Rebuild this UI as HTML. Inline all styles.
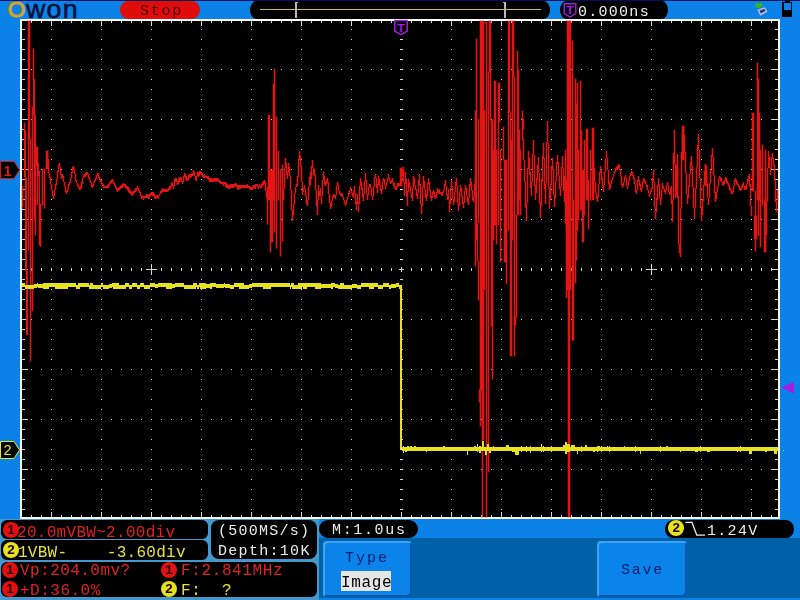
<!DOCTYPE html>
<html><head><meta charset="utf-8"><title>OWON oscilloscope</title>
<style>
html,body{margin:0;padding:0;}
body{width:800px;height:600px;overflow:hidden;background:#0a82e8;position:relative;font-family:"Liberation Mono","DejaVu Sans Mono",monospace;font-size:16px;line-height:16px;}
.abs{position:absolute;}
.t{position:absolute;white-space:pre;letter-spacing:0.1px;will-change:transform;}
.pill{position:absolute;background:#000;border-radius:9px;}
.box{position:absolute;background:#000;border-radius:6px;}
.circ{position:absolute;width:16px;height:16px;border-radius:50%;font-family:"Liberation Sans",sans-serif;font-weight:bold;font-size:13.5px;line-height:16px;text-align:center;color:#200;will-change:transform;}
.btn{position:absolute;background:#0a84ea;border-radius:4px;box-shadow:inset 2px 2px 0 #3ea2f4, inset -2px -2px 0 #0558a8;}
</style></head><body>
<div class="abs" style="left:0;top:0;width:800px;height:1px;background:#00105a"></div>
<!-- logo -->
<div class="abs" style="left:7.8px;top:-1.1px;font-family:'Liberation Sans',sans-serif;font-size:22.5px;line-height:22.5px;color:#d9a21c;-webkit-text-stroke:1.1px #d9a21c;">O</div>
<div class="abs" style="left:25.8px;top:-3.5px;font-family:'Liberation Sans',sans-serif;font-size:25px;line-height:25px;color:#00103c;-webkit-text-stroke:0.6px #00103c;letter-spacing:1.2px;white-space:nowrap;transform:scaleX(1.07);transform-origin:0 0;">won</div>
<!-- stop -->
<div class="abs" style="left:120px;top:1px;width:80px;height:18px;border-radius:8px/9px;background:#e00c0c"></div>
<div class="t" style="left:139.5px;top:4.3px;color:#4a0000;font-size:15px;letter-spacing:1.75px;">Stop</div>
<!-- position bar -->
<div class="pill" style="left:250px;top:1px;width:300px;height:18px;border-radius:6.5px/9px;"></div>
<div class="abs" style="left:260px;top:9px;width:281px;height:1px;background:#c8c23c"></div>
<div class="abs" style="left:294.5px;top:2px;width:2px;height:16px;background:#b8b8b8"></div>
<div class="abs" style="left:294.5px;top:2px;width:3.5px;height:1px;background:#b8b8b8"></div>
<div class="abs" style="left:504px;top:2px;width:2px;height:16px;background:#b8b8b8"></div>
<div class="abs" style="left:502.5px;top:2px;width:3.5px;height:1px;background:#b8b8b8"></div>
<div class="pill" style="left:560px;top:1px;width:108px;height:18px;border-radius:6px/9px;"></div>
<svg class="abs" style="left:562px;top:2px" width="16" height="17" viewBox="0 0 16 17"><path d="M2.2 1.8 H13.8 V11.5 L8 15 L2.2 11.5 Z" fill="#000" stroke="#a41ee0" stroke-width="1.4" stroke-linejoin="round"/><text x="8" y="11.9" text-anchor="middle" transform="translate(8 0) scale(1.18 1) translate(-8 0)" style="font-family:'Liberation Sans',sans-serif;font-weight:bold;font-size:10.5px" fill="#a41ee0">T</text></svg>
<div class="t" style="left:578px;top:5.2px;color:#f0f0f0;font-size:15px;letter-spacing:1.27px;">0.000ns</div>
<!-- usb icon -->
<svg class="abs" style="left:752px;top:0" width="20" height="18" viewBox="0 0 20 18"><path d="M3.4 2.2 L6 3.6 L9.8 2.4 L10.8 5.2 L6.8 8.6 L3.8 7.2 Z" fill="#30b818"/><path d="M5.4 9.8 L12.6 7.2 L15.6 11.4 L8.2 15.8 Z" fill="#c4c4d4"/><path d="M7.4 10.6 L12.2 8.8 L13.6 11 L8.8 13.4 Z" fill="#283890"/></svg>
<!-- battery -->
<div class="abs" style="left:784.5px;top:0;width:5px;height:2px;background:#000820"></div>
<div class="abs" style="left:782px;top:1.5px;width:10px;height:15px;background:#000;"></div>
<div class="abs" style="left:783.5px;top:3px;width:7px;height:6.5px;background:#0a82e8;"></div>

<!-- plot -->
<div class="abs" style="left:20px;top:19px;width:760px;height:500px;background:#fff"></div>
<svg class="abs" style="left:0;top:0" width="800" height="600" viewBox="0 0 800 600">
<rect x="22" y="21" width="756" height="496" fill="#000"/>
<g fill="none" stroke="#d8d8d8" shape-rendering="crispEdges"><path d="M51.5 29V510" stroke-width="1" stroke-dasharray="1 9"/><path d="M101.5 29V510" stroke-width="1" stroke-dasharray="1 9"/><path d="M151.5 29V510" stroke-width="1" stroke-dasharray="1 9"/><path d="M201.5 29V510" stroke-width="1" stroke-dasharray="1 9"/><path d="M251.5 29V510" stroke-width="1" stroke-dasharray="1 9"/><path d="M301.5 29V510" stroke-width="1" stroke-dasharray="1 9"/><path d="M351.5 29V510" stroke-width="1" stroke-dasharray="1 9"/><path d="M451.5 29V510" stroke-width="1" stroke-dasharray="1 9"/><path d="M501.5 29V510" stroke-width="1" stroke-dasharray="1 9"/><path d="M551.5 29V510" stroke-width="1" stroke-dasharray="1 9"/><path d="M601.5 29V510" stroke-width="1" stroke-dasharray="1 9"/><path d="M651.5 29V510" stroke-width="1" stroke-dasharray="1 9"/><path d="M701.5 29V510" stroke-width="1" stroke-dasharray="1 9"/><path d="M751.5 29V510" stroke-width="1" stroke-dasharray="1 9"/><path d="M31 69.5H772" stroke-width="1" stroke-dasharray="1 9"/><path d="M31 119.5H772" stroke-width="1" stroke-dasharray="1 9"/><path d="M31 169.5H772" stroke-width="1" stroke-dasharray="1 9"/><path d="M31 219.5H772" stroke-width="1" stroke-dasharray="1 9"/><path d="M31 319.5H772" stroke-width="1" stroke-dasharray="1 9"/><path d="M31 369.5H772" stroke-width="1" stroke-dasharray="1 9"/><path d="M31 419.5H772" stroke-width="1" stroke-dasharray="1 9"/><path d="M31 469.5H772" stroke-width="1" stroke-dasharray="1 9"/><path d="M31 269.5H772" stroke-width="3" stroke-dasharray="1 9"/><path d="M401.5 29V510" stroke-width="3" stroke-dasharray="1 9"/><path d="M146 269.5H157M151.5 264V275" stroke-width="1"/><path d="M646 269.5H657M651.5 264V275" stroke-width="1"/><path d="M399 269.5H404M401.5 267V272" stroke-width="1"/><path d="M31 22H772M31 516H772" stroke-width="2" stroke-dasharray="1 9"/><path d="M51 23.5H772M51 514.5H772" stroke-width="5" stroke-dasharray="1 49"/><path d="M23.5 29V510M776.5 29V510" stroke-width="3" stroke-dasharray="1 9"/><path d="M25 69V510M775 69V510" stroke-width="6" stroke-dasharray="1 49"/></g>
<path d="M47.5 151V162M48.5 159V173M49.5 173V178M50.5 177V184M51.5 184V190M52.5 190V196M53.5 195V199M54.5 190V196M55.5 184V190M56.5 179V185M57.5 171V179M58.5 165V172M59.5 163V167M60.5 167V175M61.5 174V179M62.5 174V178M63.5 176V182M64.5 182V186M65.5 186V192M66.5 191V194M67.5 189V192M68.5 184V189M69.5 182V185M70.5 178V183M71.5 172V178M72.5 167V173M73.5 166V170M74.5 169V174M75.5 174V181M76.5 180V183M77.5 183V186M78.5 185V188M79.5 187V190M80.5 186V190M81.5 182V188M82.5 178V184M83.5 175V178M84.5 174V177M85.5 173V177M86.5 172V175M87.5 172V175M88.5 174V178M89.5 177V180M90.5 180V183M91.5 183V187M92.5 185V188M93.5 183V186M94.5 180V183M95.5 178V181M96.5 175V179M97.5 173V176M98.5 173V178M99.5 177V180M100.5 179V182M101.5 180V184M102.5 183V186M103.5 184V188M104.5 186V188M105.5 186V188M106.5 186V188M107.5 185V188M108.5 184V188M109.5 183V186M110.5 181V184M111.5 180V183M112.5 179V182M113.5 181V184M114.5 183V186M115.5 185V188M116.5 187V190M117.5 188V192M118.5 188V191M119.5 187V190M120.5 186V189M121.5 185V188M122.5 184V188M123.5 183V186M124.5 184V187M125.5 184V188M126.5 186V189M127.5 186V190M128.5 187V192M129.5 189V193M130.5 191V194M131.5 191V195M132.5 192V196M133.5 191V194M134.5 190V193M135.5 188V192M136.5 188V191M137.5 186V189M138.5 188V191M139.5 190V193M140.5 192V196M141.5 195V199M142.5 196V198M143.5 196V200M144.5 196V198M145.5 196V198M146.5 194V198M147.5 194V198M148.5 195V199M149.5 194V198M150.5 193V196M151.5 192V195M152.5 192V196M153.5 192V196M154.5 194V198M155.5 196V199M156.5 195V198M157.5 195V198M158.5 196V199M159.5 194V196M160.5 191V194M161.5 190V193M162.5 188V192M163.5 189V192M164.5 189V192M165.5 189V192M166.5 189V192M167.5 189V192M168.5 188V191M169.5 186V190M170.5 186V189M171.5 183V187M172.5 182V186M173.5 185V189M174.5 179V186M175.5 178V182M176.5 178V182M177.5 181V185M178.5 179V184M179.5 177V182M180.5 177V180M181.5 178V182M182.5 181V184M183.5 176V182M184.5 173V177M185.5 174V179M186.5 176V181M187.5 178V181M188.5 175V180M189.5 174V178M190.5 174V178M191.5 174V177M192.5 173V176M193.5 170V175M194.5 172V176M195.5 176V180M196.5 176V181M197.5 172V176M198.5 172V177M199.5 171V176M200.5 171V174M201.5 172V175M202.5 173V177M203.5 175V178M204.5 174V178M205.5 176V178M206.5 176V178M207.5 176V179M208.5 176V180M209.5 178V182M210.5 178V182M211.5 178V182M212.5 179V182M213.5 178V182M214.5 178V181M215.5 178V182M216.5 178V182M217.5 178V181M218.5 179V182M219.5 180V183M220.5 181V184M221.5 182V184M222.5 182V184M223.5 182V186M224.5 182V184M225.5 182V187M226.5 183V188M227.5 184V188M228.5 185V189M229.5 185V189M230.5 184V188M231.5 184V188M232.5 184V188M233.5 184V188M234.5 184V187M235.5 183V186M236.5 184V187M237.5 185V189M238.5 185V190M239.5 185V189M240.5 185V189M241.5 185V188M242.5 185V188M243.5 185V188M244.5 185V188M245.5 185V188M246.5 185V188M247.5 184V188M248.5 186V188M249.5 186V189M250.5 187V190M251.5 187V190M252.5 187V190M253.5 185V189M254.5 185V188M255.5 184V189M256.5 184V186M257.5 184V187M258.5 186V189M259.5 184V187M260.5 186V188M261.5 184V188M262.5 182V186M263.5 181V185M264.5 180V184M265.5 182V191M266.5 191V197M267.5 196V200M283.5 189V200M284.5 168V189M285.5 158V168M286.5 163V175M287.5 172V179M288.5 163V172M289.5 167V176M290.5 176V190M291.5 190V210M292.5 210V221M293.5 204V215M294.5 193V204M295.5 187V193M296.5 184V187M297.5 176V186M298.5 159V177M299.5 151V160M300.5 156V167M301.5 166V182M302.5 182V195M303.5 188V192M304.5 185V189M305.5 189V196M306.5 196V204M307.5 200V206M308.5 187V200M309.5 177V187M310.5 172V185M311.5 166V179M312.5 160V168M313.5 168V175M314.5 169V176M315.5 175V190M316.5 190V206M317.5 200V215M318.5 185V200M319.5 191V196M320.5 188V196M321.5 196V204M322.5 180V196M323.5 172V180M324.5 176V184M325.5 182V186M326.5 180V184M327.5 178V183M328.5 182V194M329.5 194V203M330.5 203V209M331.5 201V207M332.5 196V201M333.5 194V197M334.5 195V198M335.5 195V199M336.5 186V195M337.5 182V186M338.5 185V191M339.5 191V194M340.5 193V196M341.5 193V196M342.5 194V197M343.5 197V200M344.5 200V204M345.5 203V206M346.5 200V204M347.5 197V200M348.5 193V197M349.5 190V194M350.5 187V190M351.5 190V193M352.5 193V196M353.5 191V198M354.5 186V193M355.5 193V204M356.5 201V210M357.5 194V204M358.5 202V212M359.5 186V204M360.5 178V186M361.5 182V190M362.5 188V197M363.5 194V201M364.5 181V194M365.5 173V181M366.5 180V194M367.5 194V200M368.5 187V195M369.5 184V187M370.5 184V188M371.5 188V196M372.5 196V200M373.5 187V196M374.5 177V187M375.5 174V178M376.5 178V188M377.5 184V193M378.5 176V185M379.5 179V186M380.5 185V191M381.5 189V194M382.5 182V190M383.5 178V182M384.5 179V185M385.5 185V189M386.5 182V186M387.5 178V182M388.5 174V178M389.5 178V181M390.5 181V184M391.5 180V183M392.5 178V182M393.5 182V186M394.5 183V188M395.5 187V190M396.5 186V190M397.5 183V187M398.5 183V186M399.5 184V186M400.5 183V186M401.5 176V184M402.5 169V176M403.5 167V182M404.5 182V196M405.5 172V184M406.5 179V197M407.5 191V206M408.5 179V192M409.5 182V187M410.5 186V193M411.5 193V198M412.5 188V201M413.5 176V188M414.5 178V185M415.5 185V190M416.5 189V196M417.5 193V199M418.5 180V193M419.5 174V185M420.5 184V204M421.5 204V214M422.5 187V206M423.5 176V187M424.5 181V189M425.5 189V198M426.5 194V201M427.5 183V196M428.5 178V184M429.5 182V191M430.5 190V198M431.5 196V201M432.5 192V198M433.5 190V194M434.5 192V197M435.5 195V199M436.5 192V198M437.5 188V193M438.5 190V194M439.5 189V194M440.5 192V194M441.5 192V195M442.5 192V196M443.5 190V193M444.5 184V190M445.5 180V186M446.5 186V195M447.5 194V200M448.5 189V200M449.5 200V212M450.5 188V204M451.5 180V188M452.5 186V199M453.5 199V205M454.5 192V202M455.5 182V192M456.5 178V186M457.5 186V203M458.5 203V211M459.5 192V206M460.5 185V192M461.5 188V197M462.5 196V204M463.5 202V208M464.5 191V203M465.5 185V191M466.5 188V196M467.5 196V202M468.5 198V205M469.5 184V198M470.5 178V186M471.5 182V191M472.5 190V200M473.5 197V202M474.5 184V197M475.5 180V186M522.5 129V140M523.5 139V160M524.5 160V182M525.5 182V208M526.5 203V221M527.5 168V203M528.5 151V169M529.5 158V175M530.5 172V188M531.5 182V196M532.5 154V182M533.5 140V155M534.5 155V186M535.5 185V200M536.5 178V193M537.5 165V180M538.5 157V173M539.5 173V203M540.5 202V218M541.5 179V206M542.5 156V182M543.5 143V159M544.5 158V189M545.5 183V204M546.5 142V183M547.5 121V143M548.5 143V187M549.5 187V209M550.5 184V200M551.5 166V185M552.5 158V170M553.5 169V195M554.5 195V207M555.5 181V198M556.5 162V181M557.5 155V164M558.5 162V176M559.5 176V189M560.5 186V196M561.5 167V186M562.5 156V168M563.5 168V191M564.5 176V202M565.5 150V224M566.5 224V298M593.5 160V168M594.5 168V182M595.5 182V193M596.5 193V199M597.5 196V202M598.5 184V197M599.5 172V184M600.5 166V173M601.5 171V180M602.5 178V188M603.5 185V192M604.5 172V185M605.5 158V172M606.5 151V158M607.5 158V170M608.5 170V184M609.5 182V190M610.5 184V188M611.5 180V184M612.5 177V180M613.5 174V177M614.5 171V174M615.5 168V172M616.5 167V170M617.5 166V170M618.5 164V168M619.5 165V170M620.5 169V176M621.5 176V185M622.5 184V188M623.5 182V186M624.5 177V182M625.5 175V178M626.5 178V186M627.5 186V189M628.5 181V186M629.5 176V181M630.5 173V176M631.5 171V175M632.5 172V176M633.5 175V179M634.5 178V184M635.5 184V192M636.5 190V194M637.5 180V190M638.5 176V181M639.5 180V186M640.5 184V190M641.5 188V192M642.5 182V188M643.5 178V183M644.5 179V182M645.5 181V184M646.5 184V187M647.5 185V190M648.5 190V193M649.5 193V197M650.5 191V194M651.5 188V192M652.5 178V189M653.5 170V182M654.5 182V207M655.5 207V219M656.5 198V212M657.5 185V200M658.5 178V186M659.5 184V198M660.5 198V205M661.5 189V199M662.5 183V189M663.5 186V189M664.5 189V192M665.5 190V194M666.5 185V191M667.5 182V185M668.5 185V192M669.5 192V195M670.5 188V194M671.5 186V204M672.5 200V222M673.5 153V200M674.5 130V164M675.5 164V198M676.5 165V187M677.5 154V198M678.5 196V244M679.5 244V253M680.5 208V257M681.5 152V208M682.5 133V152M683.5 126V135M684.5 135V153M685.5 152V173M686.5 173V194M687.5 194V204M688.5 186V198M689.5 174V187M690.5 162V174M691.5 156V166M692.5 166V187M693.5 187V208M694.5 208V219M695.5 188V208M696.5 167V189M697.5 145V167M698.5 134V150M699.5 150V178M700.5 178V208M701.5 206V221M702.5 199V215M703.5 185V201M704.5 171V185M705.5 164V172M706.5 171V184M707.5 184V198M708.5 198V205M709.5 183V198M710.5 169V183M711.5 155V169M712.5 148V157M713.5 157V175M714.5 175V193M715.5 192V202M716.5 192V199M717.5 186V192M718.5 179V186M719.5 176V179M720.5 177V181M721.5 178V182M722.5 182V185M723.5 182V186M724.5 180V184M725.5 177V181M726.5 178V183M727.5 181V184M728.5 183V186M729.5 185V190M730.5 188V191M731.5 190V194M732.5 191V194M733.5 186V192M734.5 180V186M735.5 178V182M736.5 180V184M737.5 182V185M738.5 184V187M739.5 186V190M740.5 188V191M741.5 186V190M742.5 184V188M743.5 182V186M744.5 186V190M745.5 186V190M746.5 184V189M747.5 179V184M748.5 176V181M749.5 174V186M750.5 184V206M751.5 206V216M765.5 235V252M766.5 202V235M767.5 168V202M768.5 151V168M769.5 157V168M770.5 168V175M771.5 157V169M772.5 153V159M773.5 158V166M774.5 165V181M775.5 181V202M776.5 201V212M777.5 190V201" fill="none" stroke="#e21414" stroke-width="3" stroke-opacity="0.28"/><path d="M47.5 151V162M48.5 159V173M49.5 173V178M50.5 177V184M51.5 184V190M52.5 190V196M53.5 195V199M54.5 190V196M55.5 184V190M56.5 179V185M57.5 171V179M58.5 165V172M59.5 163V167M60.5 167V175M61.5 174V179M62.5 174V178M63.5 176V182M64.5 182V186M65.5 186V192M66.5 191V194M67.5 189V192M68.5 184V189M69.5 182V185M70.5 178V183M71.5 172V178M72.5 167V173M73.5 166V170M74.5 169V174M75.5 174V181M76.5 180V183M77.5 183V186M78.5 185V188M79.5 187V190M80.5 186V190M81.5 182V188M82.5 178V184M83.5 175V178M84.5 174V177M85.5 173V177M86.5 172V175M87.5 172V175M88.5 174V178M89.5 177V180M90.5 180V183M91.5 183V187M92.5 185V188M93.5 183V186M94.5 180V183M95.5 178V181M96.5 175V179M97.5 173V176M98.5 173V178M99.5 177V180M100.5 179V182M101.5 180V184M102.5 183V186M103.5 184V188M104.5 186V188M105.5 186V188M106.5 186V188M107.5 185V188M108.5 184V188M109.5 183V186M110.5 181V184M111.5 180V183M112.5 179V182M113.5 181V184M114.5 183V186M115.5 185V188M116.5 187V190M117.5 188V192M118.5 188V191M119.5 187V190M120.5 186V189M121.5 185V188M122.5 184V188M123.5 183V186M124.5 184V187M125.5 184V188M126.5 186V189M127.5 186V190M128.5 187V192M129.5 189V193M130.5 191V194M131.5 191V195M132.5 192V196M133.5 191V194M134.5 190V193M135.5 188V192M136.5 188V191M137.5 186V189M138.5 188V191M139.5 190V193M140.5 192V196M141.5 195V199M142.5 196V198M143.5 196V200M144.5 196V198M145.5 196V198M146.5 194V198M147.5 194V198M148.5 195V199M149.5 194V198M150.5 193V196M151.5 192V195M152.5 192V196M153.5 192V196M154.5 194V198M155.5 196V199M156.5 195V198M157.5 195V198M158.5 196V199M159.5 194V196M160.5 191V194M161.5 190V193M162.5 188V192M163.5 189V192M164.5 189V192M165.5 189V192M166.5 189V192M167.5 189V192M168.5 188V191M169.5 186V190M170.5 186V189M171.5 183V187M172.5 182V186M173.5 185V189M174.5 179V186M175.5 178V182M176.5 178V182M177.5 181V185M178.5 179V184M179.5 177V182M180.5 177V180M181.5 178V182M182.5 181V184M183.5 176V182M184.5 173V177M185.5 174V179M186.5 176V181M187.5 178V181M188.5 175V180M189.5 174V178M190.5 174V178M191.5 174V177M192.5 173V176M193.5 170V175M194.5 172V176M195.5 176V180M196.5 176V181M197.5 172V176M198.5 172V177M199.5 171V176M200.5 171V174M201.5 172V175M202.5 173V177M203.5 175V178M204.5 174V178M205.5 176V178M206.5 176V178M207.5 176V179M208.5 176V180M209.5 178V182M210.5 178V182M211.5 178V182M212.5 179V182M213.5 178V182M214.5 178V181M215.5 178V182M216.5 178V182M217.5 178V181M218.5 179V182M219.5 180V183M220.5 181V184M221.5 182V184M222.5 182V184M223.5 182V186M224.5 182V184M225.5 182V187M226.5 183V188M227.5 184V188M228.5 185V189M229.5 185V189M230.5 184V188M231.5 184V188M232.5 184V188M233.5 184V188M234.5 184V187M235.5 183V186M236.5 184V187M237.5 185V189M238.5 185V190M239.5 185V189M240.5 185V189M241.5 185V188M242.5 185V188M243.5 185V188M244.5 185V188M245.5 185V188M246.5 185V188M247.5 184V188M248.5 186V188M249.5 186V189M250.5 187V190M251.5 187V190M252.5 187V190M253.5 185V189M254.5 185V188M255.5 184V189M256.5 184V186M257.5 184V187M258.5 186V189M259.5 184V187M260.5 186V188M261.5 184V188M262.5 182V186M263.5 181V185M264.5 180V184M265.5 182V191M266.5 191V197M267.5 196V200M283.5 189V200M284.5 168V189M285.5 158V168M286.5 163V175M287.5 172V179M288.5 163V172M289.5 167V176M290.5 176V190M291.5 190V210M292.5 210V221M293.5 204V215M294.5 193V204M295.5 187V193M296.5 184V187M297.5 176V186M298.5 159V177M299.5 151V160M300.5 156V167M301.5 166V182M302.5 182V195M303.5 188V192M304.5 185V189M305.5 189V196M306.5 196V204M307.5 200V206M308.5 187V200M309.5 177V187M310.5 172V185M311.5 166V179M312.5 160V168M313.5 168V175M314.5 169V176M315.5 175V190M316.5 190V206M317.5 200V215M318.5 185V200M319.5 191V196M320.5 188V196M321.5 196V204M322.5 180V196M323.5 172V180M324.5 176V184M325.5 182V186M326.5 180V184M327.5 178V183M328.5 182V194M329.5 194V203M330.5 203V209M331.5 201V207M332.5 196V201M333.5 194V197M334.5 195V198M335.5 195V199M336.5 186V195M337.5 182V186M338.5 185V191M339.5 191V194M340.5 193V196M341.5 193V196M342.5 194V197M343.5 197V200M344.5 200V204M345.5 203V206M346.5 200V204M347.5 197V200M348.5 193V197M349.5 190V194M350.5 187V190M351.5 190V193M352.5 193V196M353.5 191V198M354.5 186V193M355.5 193V204M356.5 201V210M357.5 194V204M358.5 202V212M359.5 186V204M360.5 178V186M361.5 182V190M362.5 188V197M363.5 194V201M364.5 181V194M365.5 173V181M366.5 180V194M367.5 194V200M368.5 187V195M369.5 184V187M370.5 184V188M371.5 188V196M372.5 196V200M373.5 187V196M374.5 177V187M375.5 174V178M376.5 178V188M377.5 184V193M378.5 176V185M379.5 179V186M380.5 185V191M381.5 189V194M382.5 182V190M383.5 178V182M384.5 179V185M385.5 185V189M386.5 182V186M387.5 178V182M388.5 174V178M389.5 178V181M390.5 181V184M391.5 180V183M392.5 178V182M393.5 182V186M394.5 183V188M395.5 187V190M396.5 186V190M397.5 183V187M398.5 183V186M399.5 184V186M400.5 183V186M401.5 176V184M402.5 169V176M403.5 167V182M404.5 182V196M405.5 172V184M406.5 179V197M407.5 191V206M408.5 179V192M409.5 182V187M410.5 186V193M411.5 193V198M412.5 188V201M413.5 176V188M414.5 178V185M415.5 185V190M416.5 189V196M417.5 193V199M418.5 180V193M419.5 174V185M420.5 184V204M421.5 204V214M422.5 187V206M423.5 176V187M424.5 181V189M425.5 189V198M426.5 194V201M427.5 183V196M428.5 178V184M429.5 182V191M430.5 190V198M431.5 196V201M432.5 192V198M433.5 190V194M434.5 192V197M435.5 195V199M436.5 192V198M437.5 188V193M438.5 190V194M439.5 189V194M440.5 192V194M441.5 192V195M442.5 192V196M443.5 190V193M444.5 184V190M445.5 180V186M446.5 186V195M447.5 194V200M448.5 189V200M449.5 200V212M450.5 188V204M451.5 180V188M452.5 186V199M453.5 199V205M454.5 192V202M455.5 182V192M456.5 178V186M457.5 186V203M458.5 203V211M459.5 192V206M460.5 185V192M461.5 188V197M462.5 196V204M463.5 202V208M464.5 191V203M465.5 185V191M466.5 188V196M467.5 196V202M468.5 198V205M469.5 184V198M470.5 178V186M471.5 182V191M472.5 190V200M473.5 197V202M474.5 184V197M475.5 180V186M522.5 129V140M523.5 139V160M524.5 160V182M525.5 182V208M526.5 203V221M527.5 168V203M528.5 151V169M529.5 158V175M530.5 172V188M531.5 182V196M532.5 154V182M533.5 140V155M534.5 155V186M535.5 185V200M536.5 178V193M537.5 165V180M538.5 157V173M539.5 173V203M540.5 202V218M541.5 179V206M542.5 156V182M543.5 143V159M544.5 158V189M545.5 183V204M546.5 142V183M547.5 121V143M548.5 143V187M549.5 187V209M550.5 184V200M551.5 166V185M552.5 158V170M553.5 169V195M554.5 195V207M555.5 181V198M556.5 162V181M557.5 155V164M558.5 162V176M559.5 176V189M560.5 186V196M561.5 167V186M562.5 156V168M563.5 168V191M564.5 176V202M565.5 150V224M566.5 224V298M593.5 160V168M594.5 168V182M595.5 182V193M596.5 193V199M597.5 196V202M598.5 184V197M599.5 172V184M600.5 166V173M601.5 171V180M602.5 178V188M603.5 185V192M604.5 172V185M605.5 158V172M606.5 151V158M607.5 158V170M608.5 170V184M609.5 182V190M610.5 184V188M611.5 180V184M612.5 177V180M613.5 174V177M614.5 171V174M615.5 168V172M616.5 167V170M617.5 166V170M618.5 164V168M619.5 165V170M620.5 169V176M621.5 176V185M622.5 184V188M623.5 182V186M624.5 177V182M625.5 175V178M626.5 178V186M627.5 186V189M628.5 181V186M629.5 176V181M630.5 173V176M631.5 171V175M632.5 172V176M633.5 175V179M634.5 178V184M635.5 184V192M636.5 190V194M637.5 180V190M638.5 176V181M639.5 180V186M640.5 184V190M641.5 188V192M642.5 182V188M643.5 178V183M644.5 179V182M645.5 181V184M646.5 184V187M647.5 185V190M648.5 190V193M649.5 193V197M650.5 191V194M651.5 188V192M652.5 178V189M653.5 170V182M654.5 182V207M655.5 207V219M656.5 198V212M657.5 185V200M658.5 178V186M659.5 184V198M660.5 198V205M661.5 189V199M662.5 183V189M663.5 186V189M664.5 189V192M665.5 190V194M666.5 185V191M667.5 182V185M668.5 185V192M669.5 192V195M670.5 188V194M671.5 186V204M672.5 200V222M673.5 153V200M674.5 130V164M675.5 164V198M676.5 165V187M677.5 154V198M678.5 196V244M679.5 244V253M680.5 208V257M681.5 152V208M682.5 133V152M683.5 126V135M684.5 135V153M685.5 152V173M686.5 173V194M687.5 194V204M688.5 186V198M689.5 174V187M690.5 162V174M691.5 156V166M692.5 166V187M693.5 187V208M694.5 208V219M695.5 188V208M696.5 167V189M697.5 145V167M698.5 134V150M699.5 150V178M700.5 178V208M701.5 206V221M702.5 199V215M703.5 185V201M704.5 171V185M705.5 164V172M706.5 171V184M707.5 184V198M708.5 198V205M709.5 183V198M710.5 169V183M711.5 155V169M712.5 148V157M713.5 157V175M714.5 175V193M715.5 192V202M716.5 192V199M717.5 186V192M718.5 179V186M719.5 176V179M720.5 177V181M721.5 178V182M722.5 182V185M723.5 182V186M724.5 180V184M725.5 177V181M726.5 178V183M727.5 181V184M728.5 183V186M729.5 185V190M730.5 188V191M731.5 190V194M732.5 191V194M733.5 186V192M734.5 180V186M735.5 178V182M736.5 180V184M737.5 182V185M738.5 184V187M739.5 186V190M740.5 188V191M741.5 186V190M742.5 184V188M743.5 182V186M744.5 186V190M745.5 186V190M746.5 184V189M747.5 179V184M748.5 176V181M749.5 174V186M750.5 184V206M751.5 206V216M765.5 235V252M766.5 202V235M767.5 168V202M768.5 151V168M769.5 157V168M770.5 168V175M771.5 157V169M772.5 153V159M773.5 158V166M774.5 165V181M775.5 181V202M776.5 201V212M777.5 190V201" fill="none" stroke="#e21414" stroke-width="1" shape-rendering="crispEdges"/><g fill="none" stroke="#e21414" stroke-width="2" stroke-opacity="0.28"><rect x="22" y="186" width="1" height="21"/><rect x="24" y="123" width="1" height="8"/><path d="M25 130L27.2 335" stroke="#e21414" stroke-width="2.0"/><rect x="28" y="21" width="2" height="118"/><rect x="28" y="139" width="1" height="111"/><rect x="30" y="139" width="1" height="222"/><rect x="32" y="107" width="1" height="204"/><rect x="33" y="49" width="1" height="30"/><path d="M34.3 79L35 200" stroke="#e21414" stroke-width="2.0"/><rect x="34" y="200" width="2" height="20"/><rect x="35" y="220" width="1" height="15"/><rect x="36" y="147" width="2" height="19"/><rect x="37" y="166" width="1" height="39"/><path d="M38.8 163L40.5 247" stroke="#e21414" stroke-width="1.1"/><rect x="39" y="204" width="2" height="41"/><rect x="42" y="169" width="1" height="36"/><rect x="44" y="169" width="1" height="39"/><rect x="46" y="151" width="2" height="18"/><rect x="267" y="187" width="1" height="37"/><rect x="268" y="115" width="2" height="85"/><rect x="270" y="170" width="3" height="72"/><rect x="270" y="242" width="1" height="10"/><rect x="274" y="69" width="1" height="15"/><rect x="273" y="84" width="2" height="116"/><rect x="274" y="117" width="1" height="115"/><rect x="276" y="117" width="1" height="131"/><rect x="278" y="151" width="1" height="49"/><rect x="280" y="170" width="1" height="86"/><rect x="282" y="165" width="1" height="76"/><rect x="400" y="168" width="2" height="18"/><rect x="484" y="110" width="1" height="180"/><rect x="493" y="150" width="1" height="90"/><rect x="496" y="150" width="1" height="30"/><rect x="519" y="130" width="1" height="70"/><rect x="478" y="261" width="1" height="39"/><rect x="476" y="39" width="1" height="72"/><rect x="475" y="111" width="2" height="129"/><rect x="475" y="240" width="1" height="26"/><path d="M478.6 119L477.8 261" stroke="#e21414" stroke-width="1.0"/><rect x="480" y="21" width="3" height="369"/><rect x="479" y="390" width="1" height="12"/><rect x="480" y="390" width="1" height="36"/><rect x="482" y="390" width="1" height="127"/><rect x="483" y="22" width="1" height="418"/><path d="M483.8 22.3L486.5 22.3" stroke="#e21414" stroke-width="1.0"/><rect x="486" y="22" width="1" height="495"/><rect x="488" y="72" width="1" height="400"/><rect x="489" y="21" width="2" height="51"/><rect x="490" y="72" width="1" height="48"/><rect x="491" y="120" width="2" height="206"/><rect x="492" y="326" width="1" height="53"/><rect x="494" y="81" width="2" height="144"/><rect x="496" y="180" width="1" height="64"/><rect x="498" y="83" width="2" height="39"/><rect x="498" y="122" width="1" height="103"/><rect x="500" y="150" width="1" height="112"/><rect x="503" y="127" width="1" height="33"/><rect x="504" y="160" width="3" height="102"/><rect x="506" y="262" width="1" height="22"/><rect x="508" y="21" width="2" height="91"/><rect x="508" y="112" width="1" height="118"/><rect x="510" y="112" width="1" height="28"/><rect x="510" y="140" width="2" height="216"/><rect x="512" y="21" width="2" height="56"/><rect x="512" y="77" width="1" height="163"/><rect x="514" y="77" width="1" height="279"/><rect x="514" y="317" width="2" height="8"/><rect x="517" y="51" width="1" height="19"/><rect x="517" y="70" width="2" height="145"/><rect x="516" y="215" width="1" height="102"/><rect x="520" y="150" width="1" height="65"/><rect x="522" y="111" width="1" height="8"/><rect x="522" y="119" width="2" height="10"/><rect x="584" y="140" width="1" height="75"/><rect x="590" y="150" width="1" height="50"/><rect x="566" y="180" width="1" height="50"/><rect x="567" y="21" width="4" height="269"/><rect x="568" y="290" width="2" height="227"/><rect x="572" y="41" width="1" height="299"/><rect x="573" y="200" width="1" height="140"/><rect x="575" y="79" width="1" height="204"/><rect x="577" y="83" width="1" height="21"/><rect x="576" y="104" width="2" height="126"/><rect x="576" y="230" width="1" height="30"/><rect x="578" y="150" width="1" height="70"/><rect x="580" y="81" width="1" height="50"/><rect x="580" y="131" width="2" height="79"/><rect x="582" y="170" width="2" height="72"/><rect x="586" y="129" width="2" height="71"/><rect x="588" y="180" width="1" height="49"/><rect x="592" y="128" width="2" height="72"/><rect x="682" y="126" width="2" height="34"/><rect x="676" y="170" width="2" height="26"/><rect x="705" y="166" width="2" height="20"/><rect x="752" y="113" width="2" height="78"/><rect x="755" y="191" width="1" height="25"/><rect x="754" y="216" width="3" height="23"/><rect x="755" y="239" width="1" height="12"/><rect x="757" y="63" width="1" height="16"/><rect x="757" y="79" width="2" height="121"/><rect x="758" y="200" width="1" height="36"/><rect x="759" y="113" width="1" height="87"/><rect x="760" y="150" width="1" height="97"/><rect x="762" y="145" width="1" height="60"/><rect x="765" y="150" width="1" height="50"/><rect x="764" y="200" width="2" height="52"/></g><g fill="#e21414" shape-rendering="crispEdges"><rect x="22" y="186" width="1" height="21"/><rect x="24" y="123" width="1" height="8"/><path d="M25 130L27.2 335" stroke="#e21414" stroke-width="2.0"/><rect x="28" y="21" width="2" height="118"/><rect x="28" y="139" width="1" height="111"/><rect x="30" y="139" width="1" height="222"/><rect x="32" y="107" width="1" height="204"/><rect x="33" y="49" width="1" height="30"/><path d="M34.3 79L35 200" stroke="#e21414" stroke-width="2.0"/><rect x="34" y="200" width="2" height="20"/><rect x="35" y="220" width="1" height="15"/><rect x="36" y="147" width="2" height="19"/><rect x="37" y="166" width="1" height="39"/><path d="M38.8 163L40.5 247" stroke="#e21414" stroke-width="1.1"/><rect x="39" y="204" width="2" height="41"/><rect x="42" y="169" width="1" height="36"/><rect x="44" y="169" width="1" height="39"/><rect x="46" y="151" width="2" height="18"/><rect x="267" y="187" width="1" height="37"/><rect x="268" y="115" width="2" height="85"/><rect x="270" y="170" width="3" height="72"/><rect x="270" y="242" width="1" height="10"/><rect x="274" y="69" width="1" height="15"/><rect x="273" y="84" width="2" height="116"/><rect x="274" y="117" width="1" height="115"/><rect x="276" y="117" width="1" height="131"/><rect x="278" y="151" width="1" height="49"/><rect x="280" y="170" width="1" height="86"/><rect x="282" y="165" width="1" height="76"/><rect x="400" y="168" width="2" height="18"/><rect x="484" y="110" width="1" height="180"/><rect x="493" y="150" width="1" height="90"/><rect x="496" y="150" width="1" height="30"/><rect x="519" y="130" width="1" height="70"/><rect x="478" y="261" width="1" height="39"/><rect x="476" y="39" width="1" height="72"/><rect x="475" y="111" width="2" height="129"/><rect x="475" y="240" width="1" height="26"/><path d="M478.6 119L477.8 261" stroke="#e21414" stroke-width="1.0"/><rect x="480" y="21" width="3" height="369"/><rect x="479" y="390" width="1" height="12"/><rect x="480" y="390" width="1" height="36"/><rect x="482" y="390" width="1" height="127"/><rect x="483" y="22" width="1" height="418"/><path d="M483.8 22.3L486.5 22.3" stroke="#e21414" stroke-width="1.0"/><rect x="486" y="22" width="1" height="495"/><rect x="488" y="72" width="1" height="400"/><rect x="489" y="21" width="2" height="51"/><rect x="490" y="72" width="1" height="48"/><rect x="491" y="120" width="2" height="206"/><rect x="492" y="326" width="1" height="53"/><rect x="494" y="81" width="2" height="144"/><rect x="496" y="180" width="1" height="64"/><rect x="498" y="83" width="2" height="39"/><rect x="498" y="122" width="1" height="103"/><rect x="500" y="150" width="1" height="112"/><rect x="503" y="127" width="1" height="33"/><rect x="504" y="160" width="3" height="102"/><rect x="506" y="262" width="1" height="22"/><rect x="508" y="21" width="2" height="91"/><rect x="508" y="112" width="1" height="118"/><rect x="510" y="112" width="1" height="28"/><rect x="510" y="140" width="2" height="216"/><rect x="512" y="21" width="2" height="56"/><rect x="512" y="77" width="1" height="163"/><rect x="514" y="77" width="1" height="279"/><rect x="514" y="317" width="2" height="8"/><rect x="517" y="51" width="1" height="19"/><rect x="517" y="70" width="2" height="145"/><rect x="516" y="215" width="1" height="102"/><rect x="520" y="150" width="1" height="65"/><rect x="522" y="111" width="1" height="8"/><rect x="522" y="119" width="2" height="10"/><rect x="584" y="140" width="1" height="75"/><rect x="590" y="150" width="1" height="50"/><rect x="566" y="180" width="1" height="50"/><rect x="567" y="21" width="4" height="269"/><rect x="568" y="290" width="2" height="227"/><rect x="572" y="41" width="1" height="299"/><rect x="573" y="200" width="1" height="140"/><rect x="575" y="79" width="1" height="204"/><rect x="577" y="83" width="1" height="21"/><rect x="576" y="104" width="2" height="126"/><rect x="576" y="230" width="1" height="30"/><rect x="578" y="150" width="1" height="70"/><rect x="580" y="81" width="1" height="50"/><rect x="580" y="131" width="2" height="79"/><rect x="582" y="170" width="2" height="72"/><rect x="586" y="129" width="2" height="71"/><rect x="588" y="180" width="1" height="49"/><rect x="592" y="128" width="2" height="72"/><rect x="682" y="126" width="2" height="34"/><rect x="676" y="170" width="2" height="26"/><rect x="705" y="166" width="2" height="20"/><rect x="752" y="113" width="2" height="78"/><rect x="755" y="191" width="1" height="25"/><rect x="754" y="216" width="3" height="23"/><rect x="755" y="239" width="1" height="12"/><rect x="757" y="63" width="1" height="16"/><rect x="757" y="79" width="2" height="121"/><rect x="758" y="200" width="1" height="36"/><rect x="759" y="113" width="1" height="87"/><rect x="760" y="150" width="1" height="97"/><rect x="762" y="145" width="1" height="60"/><rect x="765" y="150" width="1" height="50"/><rect x="764" y="200" width="2" height="52"/></g><g fill="#e6e222" shape-rendering="crispEdges"><rect x="22" y="283" width="3" height="4"/><rect x="25" y="285" width="3" height="4"/><rect x="28" y="285" width="6" height="4"/><rect x="34" y="284" width="3" height="4"/><rect x="37" y="283" width="1" height="4"/><rect x="38" y="284" width="5" height="4"/><rect x="43" y="283" width="6" height="6"/><rect x="49" y="283" width="6" height="4"/><rect x="55" y="283" width="5" height="6"/><rect x="60" y="283" width="8" height="6"/><rect x="68" y="283" width="6" height="4"/><rect x="74" y="283" width="2" height="4"/><rect x="76" y="285" width="2" height="4"/><rect x="78" y="283" width="2" height="6"/><rect x="80" y="283" width="6" height="4"/><rect x="86" y="283" width="1" height="4"/><rect x="87" y="283" width="2" height="4"/><rect x="89" y="285" width="1" height="4"/><rect x="90" y="283" width="3" height="6"/><rect x="93" y="285" width="3" height="4"/><rect x="96" y="285" width="5" height="4"/><rect x="101" y="283" width="2" height="4"/><rect x="103" y="285" width="3" height="4"/><rect x="106" y="285" width="3" height="4"/><rect x="109" y="284" width="3" height="4"/><rect x="112" y="283" width="1" height="4"/><rect x="113" y="283" width="3" height="6"/><rect x="116" y="283" width="3" height="6"/><rect x="119" y="285" width="3" height="4"/><rect x="122" y="285" width="3" height="4"/><rect x="125" y="283" width="1" height="6"/><rect x="126" y="283" width="3" height="4"/><rect x="129" y="285" width="3" height="4"/><rect x="132" y="283" width="5" height="4"/><rect x="137" y="285" width="3" height="4"/><rect x="140" y="283" width="4" height="4"/><rect x="144" y="285" width="1" height="4"/><rect x="145" y="285" width="5" height="4"/><rect x="150" y="283" width="5" height="4"/><rect x="155" y="284" width="3" height="4"/><rect x="158" y="283" width="8" height="4"/><rect x="166" y="283" width="6" height="6"/><rect x="172" y="284" width="3" height="4"/><rect x="175" y="283" width="3" height="4"/><rect x="178" y="283" width="3" height="4"/><rect x="181" y="283" width="3" height="4"/><rect x="184" y="285" width="6" height="4"/><rect x="190" y="285" width="3" height="4"/><rect x="193" y="283" width="1" height="6"/><rect x="194" y="283" width="2" height="6"/><rect x="196" y="283" width="1" height="4"/><rect x="197" y="285" width="2" height="4"/><rect x="199" y="283" width="1" height="4"/><rect x="200" y="283" width="6" height="6"/><rect x="206" y="284" width="4" height="4"/><rect x="210" y="283" width="2" height="6"/><rect x="212" y="283" width="4" height="4"/><rect x="216" y="284" width="8" height="4"/><rect x="224" y="283" width="1" height="4"/><rect x="225" y="284" width="5" height="4"/><rect x="230" y="285" width="4" height="4"/><rect x="234" y="283" width="2" height="4"/><rect x="236" y="283" width="3" height="4"/><rect x="239" y="283" width="5" height="6"/><rect x="244" y="285" width="2" height="4"/><rect x="246" y="285" width="3" height="4"/><rect x="249" y="284" width="3" height="4"/><rect x="252" y="283" width="5" height="4"/><rect x="257" y="283" width="6" height="4"/><rect x="263" y="283" width="8" height="6"/><rect x="271" y="283" width="3" height="4"/><rect x="274" y="283" width="6" height="4"/><rect x="280" y="283" width="5" height="4"/><rect x="285" y="283" width="5" height="4"/><rect x="290" y="285" width="1" height="4"/><rect x="291" y="283" width="1" height="4"/><rect x="292" y="283" width="2" height="6"/><rect x="294" y="285" width="4" height="4"/><rect x="298" y="283" width="4" height="6"/><rect x="302" y="283" width="1" height="4"/><rect x="303" y="283" width="4" height="6"/><rect x="307" y="283" width="3" height="4"/><rect x="310" y="283" width="2" height="4"/><rect x="312" y="283" width="3" height="4"/><rect x="315" y="283" width="6" height="6"/><rect x="321" y="284" width="5" height="4"/><rect x="326" y="284" width="5" height="4"/><rect x="331" y="283" width="2" height="6"/><rect x="333" y="283" width="2" height="4"/><rect x="335" y="284" width="3" height="4"/><rect x="338" y="285" width="2" height="4"/><rect x="340" y="283" width="4" height="6"/><rect x="344" y="285" width="6" height="4"/><rect x="350" y="285" width="2" height="4"/><rect x="352" y="284" width="5" height="4"/><rect x="357" y="285" width="3" height="4"/><rect x="360" y="285" width="1" height="4"/><rect x="361" y="283" width="8" height="4"/><rect x="369" y="283" width="5" height="6"/><rect x="374" y="283" width="2" height="4"/><rect x="376" y="283" width="2" height="4"/><rect x="378" y="285" width="5" height="4"/><rect x="383" y="283" width="6" height="4"/><rect x="389" y="285" width="2" height="4"/><rect x="391" y="284" width="3" height="4"/><rect x="394" y="284" width="2" height="4"/><rect x="396" y="283" width="3" height="4"/><rect x="399" y="285" width="2" height="4"/><rect x="400" y="285" width="1.6" height="164"/><rect x="402" y="447" width="376" height="3.6"/><rect x="403" y="446" width="1" height="7"/><rect x="405" y="448" width="2" height="4"/><rect x="407" y="446" width="2" height="1"/><rect x="410" y="446" width="2" height="1"/><rect x="414" y="446" width="2" height="1"/><rect x="477" y="444" width="1" height="8"/><rect x="479" y="446" width="2" height="7"/><rect x="482" y="441" width="2" height="9"/><rect x="485" y="448" width="2" height="7"/><rect x="487" y="444" width="2" height="6"/><rect x="489" y="448" width="2" height="5"/><rect x="493" y="446" width="1" height="5"/><rect x="506" y="445" width="3" height="3"/><rect x="512" y="449" width="3" height="3"/><rect x="521" y="446" width="1" height="6"/><rect x="526" y="446" width="1" height="6"/><rect x="530" y="446" width="1" height="7"/><rect x="541" y="444" width="1" height="8"/><rect x="543" y="446" width="1" height="6"/><rect x="551" y="446" width="1" height="6"/><rect x="563" y="445" width="2" height="6"/><rect x="565" y="442" width="2" height="12"/><rect x="567" y="444" width="3" height="8"/><rect x="571" y="445" width="4" height="4"/><rect x="581" y="446" width="1" height="6"/><rect x="585" y="445" width="2" height="4"/><rect x="597" y="446" width="1" height="6"/><rect x="601" y="446" width="1" height="6"/><rect x="609" y="446" width="1" height="6"/><rect x="635" y="446" width="1" height="6"/><rect x="660" y="446" width="1" height="6"/><rect x="700" y="446" width="1" height="6"/><rect x="740" y="446" width="1" height="6"/><rect x="426" y="447" width="1" height="5"/><rect x="431" y="447" width="1" height="2"/><rect x="436" y="447" width="3" height="2"/><rect x="443" y="446" width="2" height="4"/><rect x="448" y="447" width="3" height="1"/><rect x="464" y="450" width="1" height="1"/><rect x="467" y="450" width="1" height="5"/><rect x="474" y="446" width="2" height="2"/><rect x="477" y="446" width="1" height="2"/><rect x="480" y="447" width="3" height="2"/><rect x="489" y="447" width="3" height="1"/><rect x="492" y="447" width="1" height="1"/><rect x="499" y="447" width="1" height="1"/><rect x="504" y="447" width="1" height="2"/><rect x="507" y="447" width="2" height="4"/><rect x="512" y="447" width="1" height="2"/><rect x="515" y="450" width="3" height="5"/><rect x="518" y="450" width="1" height="5"/><rect x="534" y="447" width="3" height="1"/><rect x="550" y="447" width="2" height="4"/><rect x="559" y="447" width="3" height="4"/><rect x="568" y="446" width="2" height="4"/><rect x="577" y="450" width="1" height="4"/><rect x="593" y="447" width="2" height="5"/><rect x="598" y="446" width="2" height="2"/><rect x="607" y="446" width="1" height="5"/><rect x="619" y="447" width="2" height="2"/><rect x="624" y="446" width="1" height="2"/><rect x="640" y="450" width="1" height="4"/><rect x="656" y="447" width="1" height="4"/><rect x="663" y="447" width="3" height="2"/><rect x="666" y="446" width="2" height="5"/><rect x="671" y="447" width="1" height="1"/><rect x="680" y="447" width="1" height="5"/><rect x="683" y="447" width="3" height="2"/><rect x="695" y="450" width="3" height="2"/><rect x="704" y="447" width="3" height="2"/><rect x="707" y="450" width="3" height="2"/><rect x="716" y="447" width="1" height="2"/><rect x="721" y="447" width="1" height="1"/><rect x="737" y="447" width="1" height="5"/><rect x="749" y="450" width="3" height="4"/><rect x="765" y="450" width="2" height="2"/><rect x="774" y="450" width="3" height="4"/><rect x="783" y="450" width="1" height="1"/></g>
<!-- T marker -->
<path d="M394.8 20.5 H407.2 V31.2 L401 34.6 L394.8 31.2 Z" fill="#000" stroke="#a41ee0" stroke-width="1.5" stroke-linejoin="round"/>
<text x="401" y="31.6" text-anchor="middle" transform="translate(401 0) scale(1.18 1) translate(-401 0)" style="font-family:'Liberation Sans',sans-serif;font-weight:bold;font-size:10.5px" fill="#a41ee0">T</text>
<!-- trigger arrow -->
<path d="M781 387.6 L794 382 V393.4 Z" fill="#a41ee0"/>
<!-- ch markers -->
<path d="M0.5 161.5 H14 L19.5 170 L14 178.5 H0.5 Z" fill="#000" stroke="#d81818" stroke-width="1"/>
<path d="M0.5 441.5 H14 L19.5 450 L14 458.5 H0.5 Z" fill="#000" stroke="#e8e430" stroke-width="1"/>
<text x="3.6" y="175.6" style="font-family:'Liberation Sans',sans-serif;font-weight:bold;font-size:14.5px" fill="#e01818">1</text>
<text x="3.4" y="455.4" style="font-family:'Liberation Sans',sans-serif;font-size:14.5px" fill="#e8e430">2</text>
</svg>

<!-- bottom -->
<div class="abs" style="left:0;top:519px;width:319px;height:81px;background:#4498cc"></div>
<div class="abs" style="left:319px;top:538px;width:481px;height:60px;background:#0061a8"></div>
<div class="box" style="left:1px;top:520px;width:207px;height:18.5px;"></div>
<div class="box" style="left:1px;top:540px;width:207px;height:19.5px;"></div>
<div class="box" style="left:1px;top:561.5px;width:316px;height:35.5px;"></div>
<div class="box" style="left:211px;top:520px;width:106px;height:39px;border-radius:8px;"></div>
<div class="circ" style="left:2.5px;top:522px;background:#e41010;">1</div>
<div class="t" style="left:17.2px;top:524.5px;color:#e02222;letter-spacing:0.3px;">20.0mVBW~2.00div</div>
<div class="circ" style="left:2.5px;top:542px;background:#e6e21e;">2</div>
<div class="t" style="left:17.5px;top:545.2px;color:#e6e23a;letter-spacing:0.27px;">1VBW-    -3.60div</div>
<div class="circ" style="left:1.8px;top:562.2px;background:#e41010;">1</div>
<div class="t" style="left:20.2px;top:562.6px;color:#e02222;letter-spacing:0.45px;">Vp:204.0mv?</div>
<div class="circ" style="left:1.8px;top:581.2px;background:#e41010;">1</div>
<div class="t" style="left:20.2px;top:582.5px;color:#e02222;letter-spacing:0.5px;">+D:36.0%</div>
<div class="circ" style="left:160.8px;top:562.2px;background:#e41010;">1</div>
<div class="t" style="left:180.5px;top:562.6px;color:#e02222;letter-spacing:0.62px;">F:2.841MHz</div>
<div class="circ" style="left:160.8px;top:581.2px;background:#e6e21e;">2</div>
<div class="t" style="left:180.5px;top:582.5px;color:#e6e23a;letter-spacing:0.62px;">F:  ?</div>
<div class="t" style="left:218px;top:523.6px;color:#ececec;font-size:15px;letter-spacing:1.25px;">(500MS/s)</div>
<div class="t" style="left:217.5px;top:543.7px;color:#ececec;font-size:15px;letter-spacing:1.3px;">Depth:10K</div>
<div class="pill" style="left:319px;top:520px;width:99px;height:17.5px;"></div>
<div class="t" style="left:331.5px;top:522.6px;color:#ececec;font-size:15px;letter-spacing:1.65px;">M:1.0us</div>
<div class="pill" style="left:664.5px;top:520px;width:129.3px;height:17.5px;border-radius:8px/8.75px;"></div>
<div class="circ" style="left:667.5px;top:520.2px;width:16.3px;height:15.8px;background:#e6e21e;">2</div>
<svg class="abs" style="left:684px;top:520px" width="24" height="18" viewBox="0 0 24 18"><path d="M1.4 2.4 H8 L12.8 15.2 H21" fill="none" stroke="#f0f0f0" stroke-width="1.3"/></svg>
<div class="t" style="left:706.5px;top:523.6px;color:#ececec;font-size:15px;letter-spacing:1.3px;">1.24V</div>
<div class="btn" style="left:322.5px;top:541px;width:89px;height:55.5px;"></div>
<div class="t" style="left:345.2px;top:551px;color:#00206e;font-size:15px;letter-spacing:2px;">Type</div>
<div class="abs" style="left:341px;top:571px;width:50px;height:19.5px;background:#e6e6e6"></div>
<div class="t" style="left:341px;top:574.5px;color:#000;letter-spacing:0.65px;">Image</div>
<div class="btn" style="left:597px;top:541px;width:89.5px;height:55.5px;"></div>
<div class="t" style="left:621.3px;top:563px;color:#00206e;font-size:15px;letter-spacing:1.75px;">Save</div>
</body></html>
